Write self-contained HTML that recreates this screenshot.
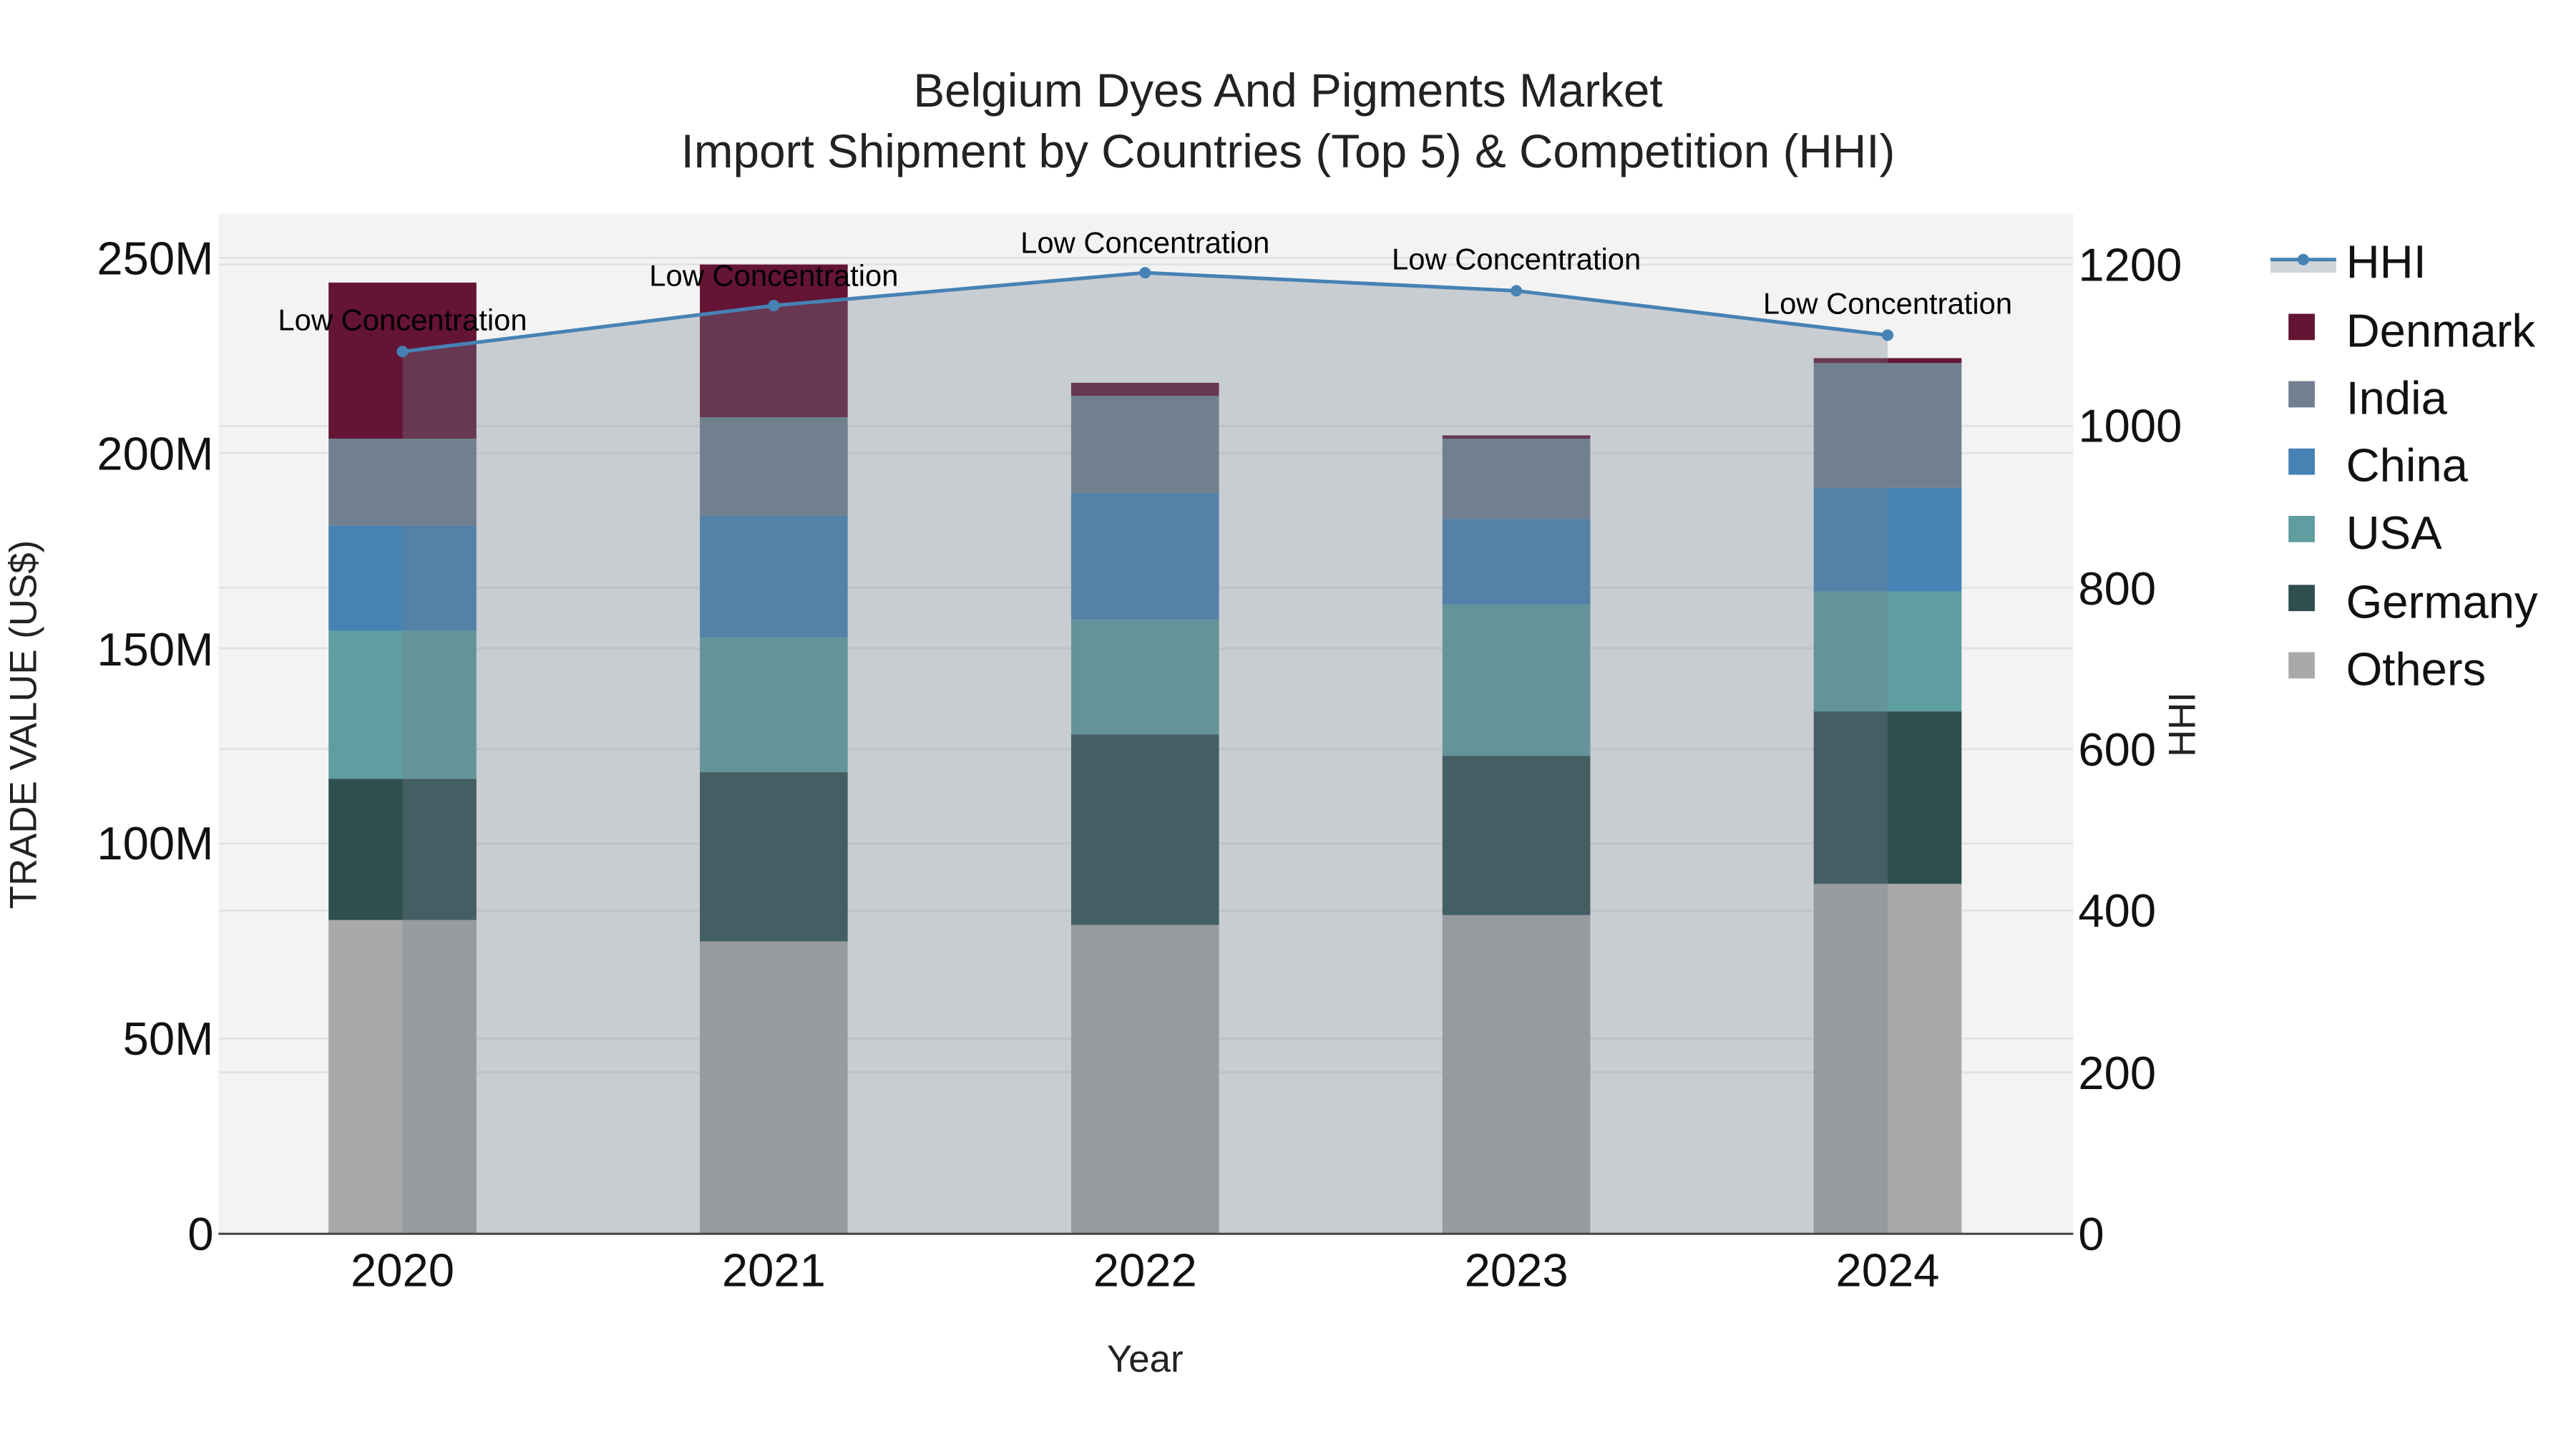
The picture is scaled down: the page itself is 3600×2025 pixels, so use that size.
<!DOCTYPE html>
<html><head><meta charset="utf-8"><style>
html,body{margin:0;padding:0;background:#fff;}
svg{display:block;}
text{font-family:"Liberation Sans",sans-serif;}
</style></head><body>
<svg width="3600" height="2025" viewBox="0 0 1568 882" preserveAspectRatio="none" xmlns="http://www.w3.org/2000/svg">
<rect x="0" y="0" width="1568" height="882" fill="#fff"/>
<rect x="133" y="130" width="1129" height="621" fill="#f3f3f3"/>
<g stroke="#e2e2e2" stroke-width="1.2">
<line x1="133" x2="1262" y1="157" y2="157"/><line x1="133" x2="1262" y1="275.8" y2="275.8"/><line x1="133" x2="1262" y1="394.6" y2="394.6"/><line x1="133" x2="1262" y1="513.4" y2="513.4"/><line x1="133" x2="1262" y1="632.2" y2="632.2"/>
<line x1="133" x2="1262" y1="161" y2="161"/><line x1="133" x2="1262" y1="259.3" y2="259.3"/><line x1="133" x2="1262" y1="357.7" y2="357.7"/><line x1="133" x2="1262" y1="456" y2="456"/><line x1="133" x2="1262" y1="554.3" y2="554.3"/><line x1="133" x2="1262" y1="652.7" y2="652.7"/>
</g>
<g>
<rect x="200" y="560" width="90" height="191" fill="#a9a9a9"/><rect x="200" y="474" width="90" height="86" fill="#2f4f4f"/><rect x="200" y="384" width="90" height="90" fill="#5f9ea0"/><rect x="200" y="320" width="90" height="64" fill="#4682b4"/><rect x="200" y="267" width="90" height="53" fill="#708090"/><rect x="200" y="172" width="90" height="95" fill="#641434"/>
<rect x="426" y="573" width="90" height="178" fill="#a9a9a9"/><rect x="426" y="470" width="90" height="103" fill="#2f4f4f"/><rect x="426" y="388" width="90" height="82" fill="#5f9ea0"/><rect x="426" y="314" width="90" height="74" fill="#4682b4"/><rect x="426" y="254" width="90" height="60" fill="#708090"/><rect x="426" y="161" width="90" height="93" fill="#641434"/>
<rect x="652" y="563" width="90" height="188" fill="#a9a9a9"/><rect x="652" y="447" width="90" height="116" fill="#2f4f4f"/><rect x="652" y="377" width="90" height="70" fill="#5f9ea0"/><rect x="652" y="300" width="90" height="77" fill="#4682b4"/><rect x="652" y="241" width="90" height="59" fill="#708090"/><rect x="652" y="233" width="90" height="8" fill="#641434"/>
<rect x="878" y="557" width="90" height="194" fill="#a9a9a9"/><rect x="878" y="460" width="90" height="97" fill="#2f4f4f"/><rect x="878" y="368" width="90" height="92" fill="#5f9ea0"/><rect x="878" y="316" width="90" height="52" fill="#4682b4"/><rect x="878" y="267" width="90" height="49" fill="#708090"/><rect x="878" y="265" width="90" height="2" fill="#641434"/>
<rect x="1104" y="538" width="90" height="213" fill="#a9a9a9"/><rect x="1104" y="433" width="90" height="105" fill="#2f4f4f"/><rect x="1104" y="360" width="90" height="73" fill="#5f9ea0"/><rect x="1104" y="297" width="90" height="63" fill="#4682b4"/><rect x="1104" y="221" width="90" height="76" fill="#708090"/><rect x="1104" y="218" width="90" height="3" fill="#641434"/>
</g>
<polygon points="245,751 245,214 471,186 697,166 923,177 1149,204 1149,751" fill="rgba(112,128,144,0.33)"/>
<line x1="133" x2="1262" y1="751" y2="751" stroke="#444" stroke-width="1.3"/>
<polyline points="245,214 471,186 697,166 923,177 1149,204" fill="none" stroke="#4682b4" stroke-width="2.2"/>
<g fill="#4682b4"><circle cx="245" cy="214" r="3.5"/><circle cx="471" cy="186" r="3.5"/><circle cx="697" cy="166" r="3.5"/><circle cx="923" cy="177" r="3.5"/><circle cx="1149" cy="204" r="3.5"/></g>
<g font-size="18.2" text-anchor="middle" fill="#000">
<text x="245" y="201">Low Concentration</text><text x="471" y="174">Low Concentration</text><text x="697" y="154">Low Concentration</text><text x="923" y="164">Low Concentration</text><text x="1149" y="191">Low Concentration</text>
</g>
<g font-size="28.6" text-anchor="middle" fill="#222">
<text x="784" y="65">Belgium Dyes And Pigments Market</text>
<text x="784" y="102">Import Shipment by Countries (Top 5) &amp; Competition (HHI)</text>
</g>
<g font-size="28.4" text-anchor="end" fill="#111">
<text x="130" y="167">250M</text><text x="130" y="286">200M</text><text x="130" y="405">150M</text><text x="130" y="523">100M</text><text x="130" y="642">50M</text><text x="130" y="761">0</text>
</g>
<g font-size="28.4" text-anchor="start" fill="#111">
<text x="1265" y="171">1200</text><text x="1265" y="269">1000</text><text x="1265" y="368">800</text><text x="1265" y="466">600</text><text x="1265" y="564">400</text><text x="1265" y="663">200</text><text x="1265" y="761">0</text>
</g>
<g font-size="28.4" text-anchor="middle" fill="#111">
<text x="245" y="783">2020</text><text x="471" y="783">2021</text><text x="697" y="783">2022</text><text x="923" y="783">2023</text><text x="1149" y="783">2024</text>
</g>
<text x="697" y="835" font-size="23" text-anchor="middle" fill="#222">Year</text>
<text transform="translate(22,441) rotate(-90)" font-size="23" text-anchor="middle" fill="#222">TRADE VALUE (US$)</text>
<text transform="translate(1336,441) rotate(-90)" font-size="23" text-anchor="middle" fill="#222">HHI</text>
<rect x="1382" y="159" width="40" height="7" fill="rgba(112,128,144,0.33)"/>
<line x1="1382" x2="1422" y1="158" y2="158" stroke="#4682b4" stroke-width="2.2"/>
<circle cx="1402" cy="158" r="3.5" fill="#4682b4"/>
<rect x="1393" y="191" width="16" height="16" fill="#641434"/>
<rect x="1393" y="232" width="16" height="16" fill="#708090"/>
<rect x="1393" y="273" width="16" height="16" fill="#4682b4"/>
<rect x="1393" y="314" width="16" height="16" fill="#5f9ea0"/>
<rect x="1393" y="356" width="16" height="16" fill="#2f4f4f"/>
<rect x="1393" y="397" width="16" height="16" fill="#a9a9a9"/>
<g font-size="28.4" fill="#111">
<text x="1428" y="169">HHI</text><text x="1428" y="211">Denmark</text><text x="1428" y="252">India</text><text x="1428" y="293">China</text><text x="1428" y="334">USA</text><text x="1428" y="376">Germany</text><text x="1428" y="417">Others</text>
</g>
</svg>
</body></html>
